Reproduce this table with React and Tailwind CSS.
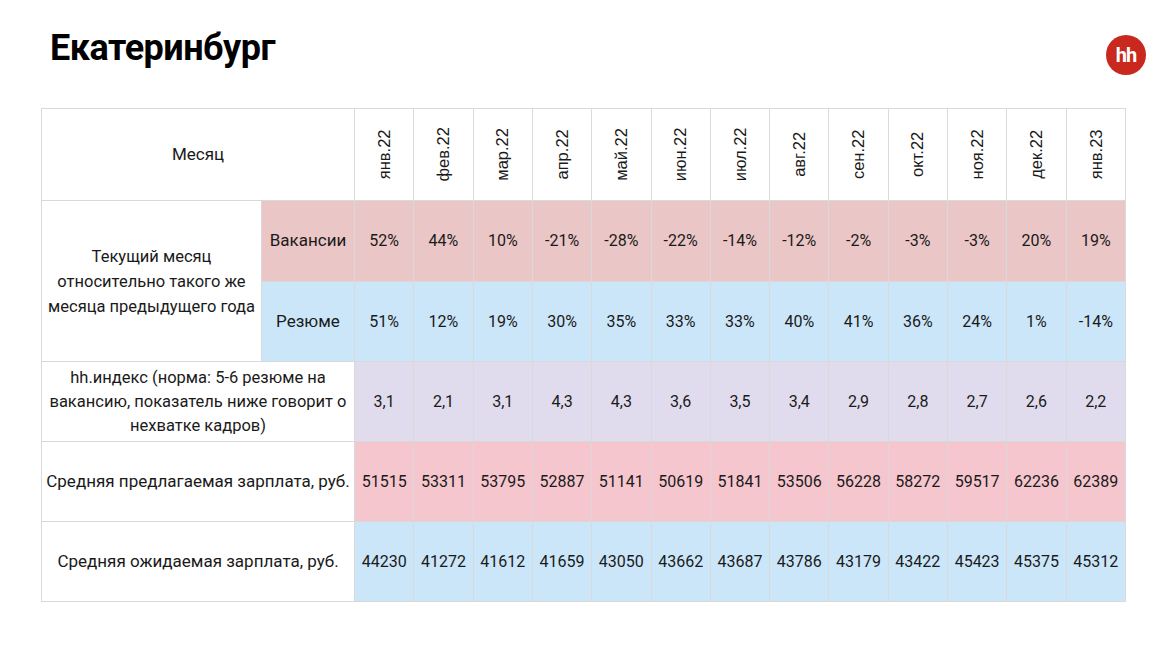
import React from "react";

const months = ["янв.22", "фев.22", "мар.22", "апр.22", "май.22", "июн.22", "июл.22", "авг.22", "сен.22", "окт.22", "ноя.22", "дек.22", "янв.23"];

const vacancies = ["52%", "44%", "10%", "-21%", "-28%", "-22%", "-14%", "-12%", "-2%", "-3%", "-3%", "20%", "19%"];
const resumes = ["51%", "12%", "19%", "30%", "35%", "33%", "33%", "40%", "41%", "36%", "24%", "1%", "-14%"];
const hhIndex = ["3,1", "2,1", "3,1", "4,3", "4,3", "3,6", "3,5", "3,4", "2,9", "2,8", "2,7", "2,6", "2,2"];
const offered = ["51515", "53311", "53795", "52887", "51141", "50619", "51841", "53506", "56228", "58272", "59517", "62236", "62389"];
const expected = ["44230", "41272", "41612", "41659", "43050", "43662", "43687", "43786", "43179", "43422", "45423", "45375", "45312"];

const cell = "border border-[#d9d9d9] text-center align-middle p-0";

function ValueCells({ values, bg }) {
  return values.map((v, i) => (
    <td key={i} className={`${cell} ${bg}`}>{v}</td>
  ));
}

export default function App() {
  return (
    <div className="w-[1176px] h-[654px] bg-white relative overflow-hidden" style={{ fontFamily: "Roboto, 'Noto Sans', sans-serif" }}>
      {/* Header */}
      <div className="flex items-start justify-between pl-[50px] pr-[30px] pt-[26px] h-[108px]">
        <h1 className="text-[36px] leading-[44px] font-bold text-black tracking-[-0.5px]">Екатеринбург</h1>
        <div className="w-[40px] h-[40px] mt-[9px] rounded-full bg-[#c9281f] flex items-center justify-center text-white font-bold text-[20px] leading-none tracking-[-1px] pb-[1px]">
          hh
        </div>
      </div>

      {/* Table */}
      <div className="pl-[41px]">
        <table className="table-fixed border-collapse w-[1085px] text-[16px] text-[#1a1a1a]">
          <colgroup>
            <col className="w-[220px]" />
            <col className="w-[93px]" />
            {months.map((m) => (
              <col key={m} />
            ))}
          </colgroup>
          <tbody>
            <tr className="h-[91px]">
              <td colSpan={2} className={`${cell} bg-white text-[17px]`}>Месяц</td>
              {months.map((m) => (
                <td key={m} className={`${cell} bg-white`}>
                  <div className="flex items-center justify-center h-[91px]">
                    <span className="-rotate-90 whitespace-nowrap text-[16.5px]" style={{ fontFamily: "'Liberation Sans', Arial, sans-serif" }}>{m}</span>
                  </div>
                </td>
              ))}
            </tr>
            <tr className="h-[81px]">
              <td rowSpan={2} className={`${cell} bg-white text-[16.5px] leading-[25px] whitespace-nowrap`}>
                Текущий месяц<br />относительно такого же<br />месяца предыдущего года
              </td>
              <td className={`${cell} bg-[#ebc6c6] text-[17px]`}>Вакансии</td>
              <ValueCells values={vacancies} bg="bg-[#ebc6c6]" />
            </tr>
            <tr className="h-[80px]">
              <td className={`${cell} bg-[#cce6f9] text-[17px]`}>Резюме</td>
              <ValueCells values={resumes} bg="bg-[#cce6f9]" />
            </tr>
            <tr className="h-[80px]">
              <td colSpan={2} className={`${cell} bg-white text-[16.5px] leading-[24px] whitespace-nowrap`}>
                hh.индекс (норма: 5-6 резюме на<br />вакансию, показатель ниже говорит о<br />нехватке кадров)
              </td>
              <ValueCells values={hhIndex} bg="bg-[#e1dced]" />
            </tr>
            <tr className="h-[80px]">
              <td colSpan={2} className={`${cell} bg-white text-[17px]`}>Средняя предлагаемая зарплата, руб.</td>
              <ValueCells values={offered} bg="bg-[#f6c6ce]" />
            </tr>
            <tr className="h-[80px]">
              <td colSpan={2} className={`${cell} bg-white text-[17px]`}>Средняя ожидаемая зарплата, руб.</td>
              <ValueCells values={expected} bg="bg-[#cce6f9]" />
            </tr>
          </tbody>
        </table>
      </div>
    </div>
  );
}
